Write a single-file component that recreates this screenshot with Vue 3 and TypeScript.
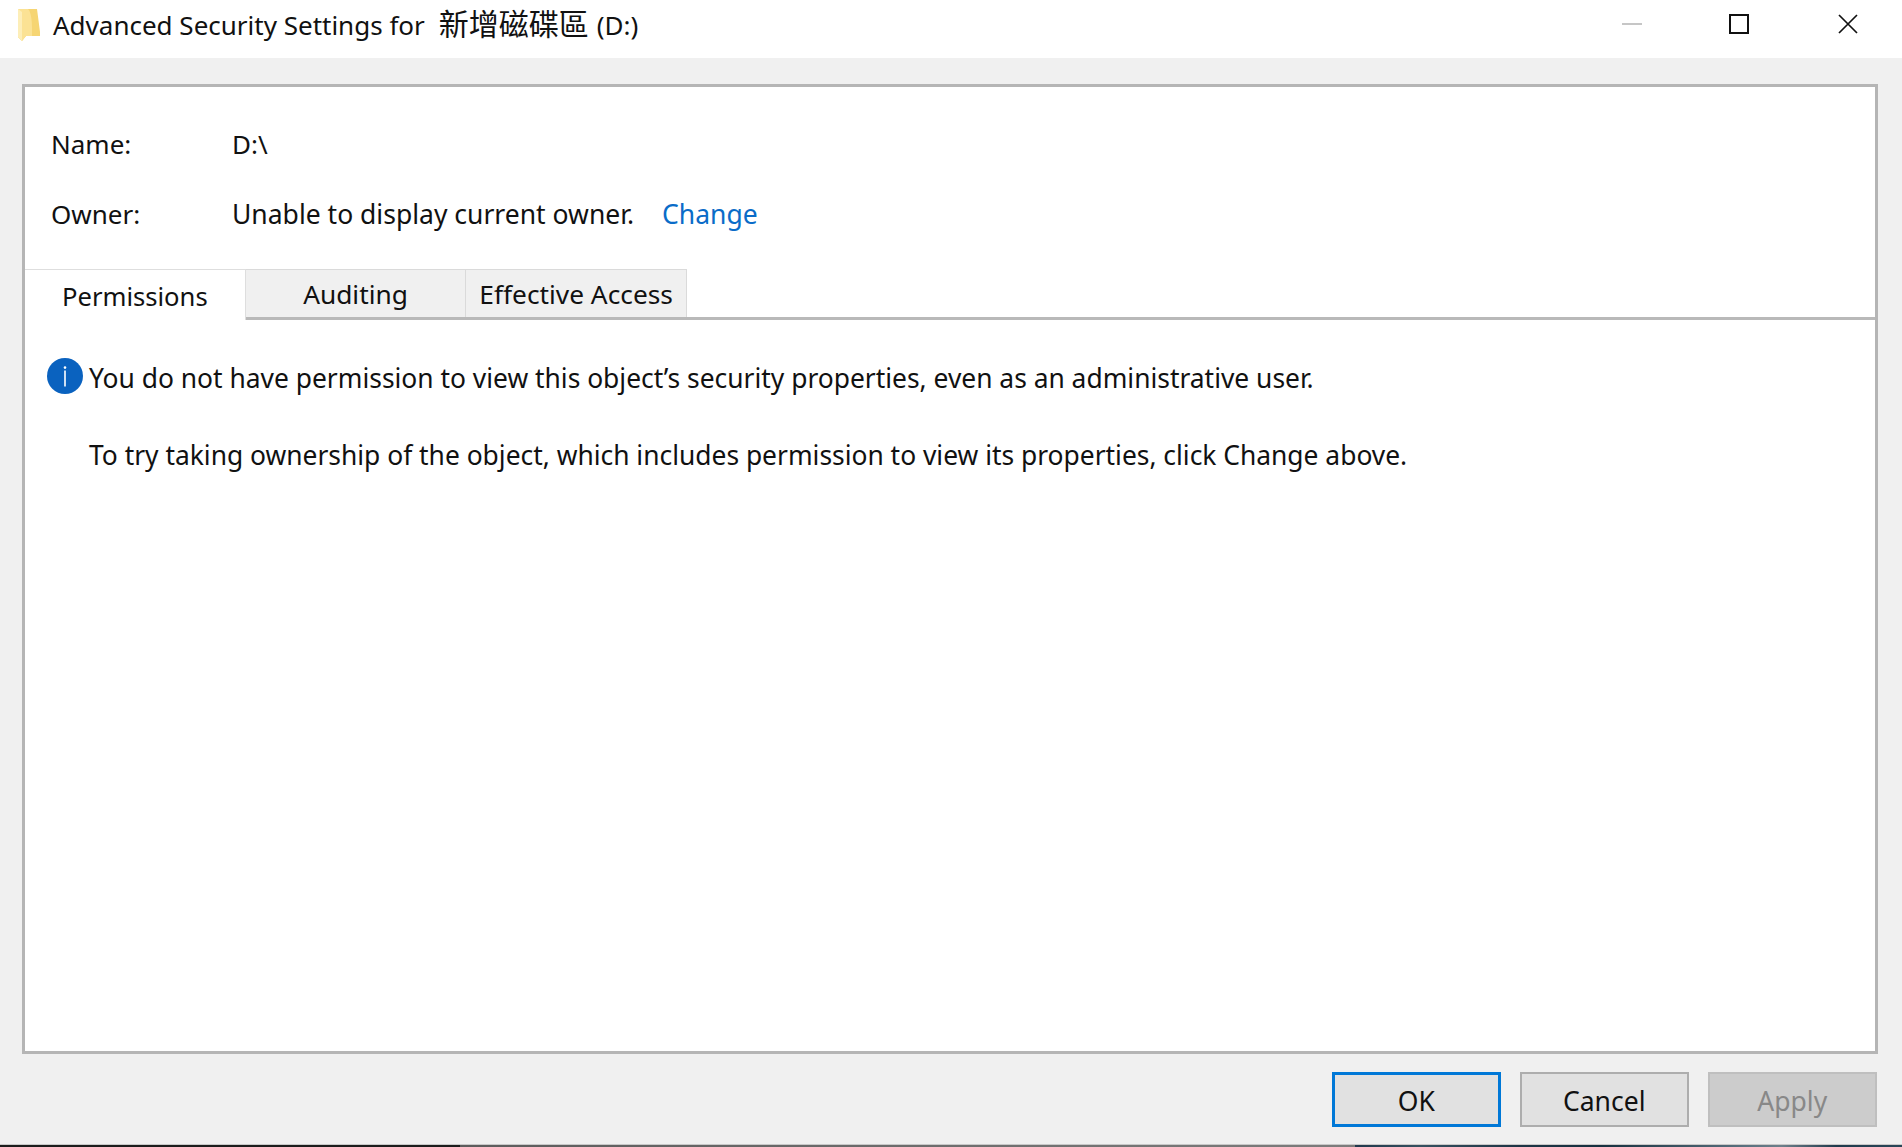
<script setup lang="ts">
const tabs: { label: string; cls: string }[] = [
  { label: 'Permissions', cls: 'active' },
  { label: 'Auditing', cls: '' },
  { label: 'Effective Access', cls: '' },
]
</script>

<template>
  <div class="window">
    <header class="titlebar">
      <svg class="folder" width="24" height="34" viewBox="0 0 24 34">
        <path d="M1 1H20L23 24V28H9L5 33L1 29Z" fill="#f6d573" />
        <path d="M1 1H11C14 4 15 12 15 20V28H9L5 33L1 29Z" fill="#fbe294" />
        <path d="M1 1L5 4V33L1 29Z" fill="#fdeeb8" />
      </svg>
      <span class="title">Advanced Security Settings for<span class="cjk">新增磁碟區</span>(D:)</span>
      <div class="controls">
        <span class="ctl min"><svg width="20" height="20" viewBox="0 0 20 20"><path d="M0 10H20" stroke="#c6c6c6" stroke-width="2" /></svg></span>
        <span class="ctl"><svg width="20" height="20" viewBox="0 0 20 20"><rect x="1" y="1" width="18" height="18" fill="none" stroke="#111" stroke-width="2" /></svg></span>
        <span class="ctl"><svg width="20" height="20" viewBox="0 0 20 20"><path d="M1 1L19 19M19 1L1 19" stroke="#111" stroke-width="1.7" /></svg></span>
      </div>
    </header>

    <main class="body">
      <section class="panel">
        <div class="meta">
          <span>Name:</span>
          <span>D:\</span>
          <span>Owner:</span>
          <span class="owner">Unable to display current owner.<a class="link">Change</a></span>
        </div>

        <nav class="tabs">
          <div v-for="t in tabs" :key="t.label" class="tab" :class="t.cls">{{ t.label }}</div>
        </nav>

        <div class="content">
          <div class="info">
            <svg class="info-icon" width="36" height="36" viewBox="0 0 36 36">
              <circle cx="18" cy="18" r="18" fill="#0a62bf" />
              <circle cx="18" cy="9.6" r="1.3" fill="#fff" />
              <rect x="17.2" y="12.5" width="1.6" height="16" fill="#fff" />
            </svg>
            <p>You do not have permission to view this object’s security properties, even as an administrative user.</p>
          </div>
          <p class="hint">To try taking ownership of the object, which includes permission to view its properties, click Change above.</p>
        </div>
      </section>

      <footer class="actions">
        <button class="btn primary">OK</button>
        <button class="btn">Cancel</button>
        <button class="btn disabled">Apply</button>
      </footer>
    </main>

    <div class="strip">
      <span class="s-dark"></span>
      <span class="s-gray"></span>
      <span class="s-blue"></span>
    </div>
  </div>
</template>

<style>
html, body { margin: 0; background: #f0f0f0; }
</style>

<style scoped>
.window {
  width: 1902px;
  height: 1147px;
  display: flex;
  flex-direction: column;
  background: #f0f0f0;
  color: #111;
  font-family: "Noto Sans", "Noto Sans CJK TC", sans-serif;
  font-size: 26px;
  line-height: 36px;
  overflow: hidden;
}
.titlebar {
  height: 58px;
  flex: none;
  display: flex;
  align-items: center;
  background: #fff;
  padding-left: 17px;
}
.folder { flex: none; margin-top: -8px; }
.title { margin-left: 12px; margin-top: -9px; }
.cjk { font-size: 30px; margin: 0 8px 0 14px; }
.controls { margin-left: auto; display: flex; margin-top: -11px; padding-right: 44px; gap: 89px; }
.ctl { width: 20px; height: 20px; display: block; }
.ctl.min { margin-right: -2px; }
.ctl svg { display: block; }
.body { flex: 1; display: flex; flex-direction: column; padding: 26px 24px 0 22px; min-height: 0; }
.panel {
  flex: 1;
  display: flex;
  flex-direction: column;
  background: #fff;
  border: 3px solid #b5b5b5;
  min-height: 0;
}
.meta {
  display: grid;
  grid-template-columns: 181px 1fr;
  row-gap: 34px;
  padding: 39px 0 0 26px;
}
.owner { font-size: 26.5px; }
.link { margin-left: 28px; color: #0a6cc8; }
.tabs {
  display: flex;
  margin-top: 37px;
  height: 48px;
  box-sizing: content-box;
  border-bottom: 3px solid #b9b9b9;
  font-size: 26.3px;
}
.tab {
  width: 220.67px;
  box-sizing: border-box;
  display: flex;
  align-items: center;
  justify-content: center;
  background: #f0f0f0;
  border: 1px solid #dadada;
  border-bottom: 0;
  border-left: 0;
}
.tab.active {
  background: #fff;
  height: 51px;
  border-color: #dedede;
  padding-top: 3px;
  font-size: 25.6px;
}
.content { padding-top: 40px; font-size: 26.4px; }
.info { display: flex; align-items: center; padding-left: 22px; }
.info-icon { flex: none; margin-right: 6px; margin-top: -4px; }
p { margin: 0; }
.hint { margin-top: 41px; padding-left: 64px; }
.actions {
  flex: none;
  height: 90px;
  display: flex;
  justify-content: flex-end;
  gap: 18.5px;
  padding: 18px 1px 0 0;
  box-sizing: border-box;
}
.btn {
  width: 169.5px;
  height: 55px;
  box-sizing: border-box;
  font: inherit;
  font-size: 26.5px;
  color: #111;
  background: #e1e1e1;
  border: 2px solid #adadad;
  padding: 2px 0 0;
}
.btn.primary { border-color: #0078d7; border-width: 3px; }
.btn.disabled { background: #cccccc; border-color: #bfbfbf; color: #888; }
.strip { height: 3px; flex: none; display: flex; border-top: 1px solid #c8c8c8; box-sizing: border-box; }
.s-dark { width: 460px; background: #1c1c1c; }
.s-gray { width: 895px; background: linear-gradient(90deg, #5c5c5c, #7c7c7c); }
.s-blue {
  flex: 1;
  background: linear-gradient(90deg, #20384c 0, #35505f 12%, #1d3445 30%, #16303f 45%, #5b7280 72%, #6d7f8a 78%, #1f3a4c 88%, #2a4658 100%);
}
</style>
